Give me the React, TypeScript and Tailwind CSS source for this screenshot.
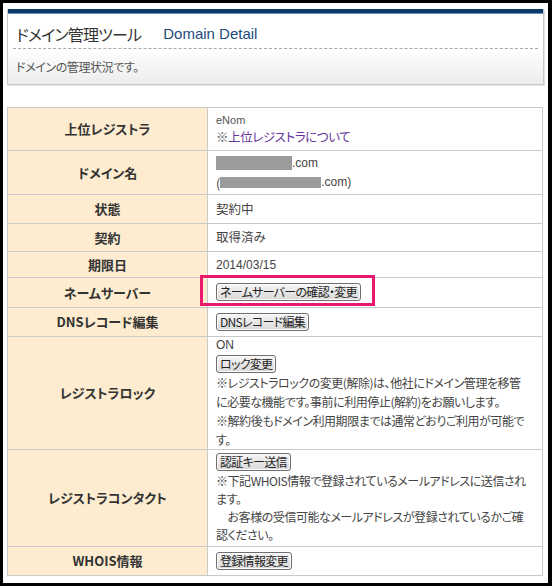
import React from "react";

const btn =
  "inline-flex items-center h-[18px] px-[3px] text-[12px] tracking-[-0.7px] leading-none text-[#222] border border-[#6f6f6f] rounded-[3px] bg-linear-to-b from-[#f6f6f6] to-[#d9d9d9] shadow-[inset_0_0_0_1px_#fbfbfb]";

const labelCls =
  "w-[200px] bg-[#fdeccf] border border-[#c9c9c9] text-center align-middle text-[13px] font-bold text-[#333]";
const valCls =
  "border border-[#c9c9c9] align-middle px-[8px] text-[12.5px] text-[#444] bg-white";
const longCls = "whitespace-nowrap text-[12px] tracking-[-0.45px]";

function Redact({ w, h }: { w: number; h: number }) {
  return <span className="inline-block bg-[#9b9b9b] align-middle" style={{ width: w, height: h }} />;
}

export default function App() {
  return (
    <div className="w-[552px] h-[586px] bg-white border-l-[3px] border-t-[3px] border-r-[4px] border-b-[3px] border-black font-['Noto_Sans_CJK_JP',sans-serif] [font-feature-settings:'palt']">
      {/* header */}
      <div className="ml-[4px] mt-[6px] w-[537px] border-x border-b border-[#c8c8c8] shadow-[1px_1px_0_#e4e4e4]">
        <div className="h-[4px] bg-[#0b3a6b]" />
        <div className="h-[1px] bg-[#6e93bb]" />
        <div className="h-[34px] flex items-center pt-[6px] pl-[8px] bg-white">
          <span className="text-[16px] tracking-[-0.8px] text-[#333]">ドメイン管理ツール</span>
          <span className="ml-[22px] text-[15px] text-[#1d4b7d] font-['Liberation_Sans',sans-serif]">Domain Detail</span>
        </div>
        <div className="mx-[5px] border-t border-dashed border-[#a8a8a8]" />
        <div className="h-[35px] flex items-center pl-[8px] bg-linear-to-b from-white to-[#ececec] text-[12px] tracking-[-0.4px] text-[#555]">
          ドメインの管理状況です。
        </div>
      </div>

      {/* table */}
      <table className="ml-[4px] mt-[22px] w-[536px] border-collapse table-fixed">
        <tbody>
          <tr className="h-[43px]">
            <td className={labelCls}>上位レジストラ</td>
            <td className={valCls}>
              <div className="text-[11px] leading-[15px] text-[#555] font-['Liberation_Sans',sans-serif]">eNom</div>
              <div className="leading-[17px] tracking-[-0.4px]">
                <span className="text-[#555]">※</span>
                <span className="text-[#663399]">上位レジストラについて</span>
              </div>
            </td>
          </tr>
          <tr className="h-[44px]">
            <td className={labelCls}>ドメイン名</td>
            <td className={valCls}>
              <div className="leading-[19px] flex items-center">
                <Redact w={76} h={14} />
                <span className="text-[12px] font-['Liberation_Sans',sans-serif]">.com</span>
              </div>
              <div className="leading-[19px] flex items-center">
                <span>(</span>
                <Redact w={101} h={11} />
                <span className="text-[12px] font-['Liberation_Sans',sans-serif]">.com)</span>
              </div>
            </td>
          </tr>
          <tr className="h-[29px]">
            <td className={labelCls}>状態</td>
            <td className={valCls}>契約中</td>
          </tr>
          <tr className="h-[28px]">
            <td className={labelCls}>契約</td>
            <td className={valCls}>取得済み</td>
          </tr>
          <tr className="h-[26px]">
            <td className={labelCls}>期限日</td>
            <td className={valCls}>
              <span className="text-[12px] font-['Liberation_Sans',sans-serif]">2014/03/15</span>
            </td>
          </tr>
          <tr className="h-[30px]">
            <td className={labelCls}>ネームサーバー</td>
            <td className={valCls + " relative"}>
              <span className={btn}>ネームサーバーの確認・変更</span>
              <div className="absolute left-[-8px] top-[-3px] w-[175px] h-[31px] border-[3px] border-[#e8196f]" />
            </td>
          </tr>
          <tr className="h-[29px]">
            <td className={labelCls}>DNSレコード編集</td>
            <td className={valCls}>
              <span className={btn}>DNSレコード編集</span>
            </td>
          </tr>
          <tr className="h-[112px]">
            <td className={labelCls}>レジストラロック</td>
            <td className={valCls + " leading-[19px]"}>
              <div className="leading-[17px] text-[12px] font-['Liberation_Sans',sans-serif]">ON</div>
              <div className="h-[19px] flex items-center">
                <span className={btn}>ロック変更</span>
              </div>
              <div className={longCls}>※レジストラロックの変更(解除)は、他社にドメイン管理を移管</div>
              <div className={longCls}>に必要な機能です。事前に利用停止(解約)をお願いします。</div>
              <div className={longCls}>※解約後もドメイン利用期限までは通常どおりご利用が可能で</div>
              <div className={longCls}>す。</div>
            </td>
          </tr>
          <tr className="h-[97px]">
            <td className={labelCls}>レジストラコンタクト</td>
            <td className={valCls + " leading-[18px]"}>
              <div className="mb-[1px]">
                <span className={btn}>認証キー送信</span>
              </div>
              <div className={longCls}>※下記WHOIS情報で登録されているメールアドレスに送信され</div>
              <div className={longCls}>ます。</div>
              <div className={longCls}>　お客様の受信可能なメールアドレスが登録されているかご確</div>
              <div className={longCls}>認ください。</div>
            </td>
          </tr>
          <tr className="h-[29px]">
            <td className={labelCls}>WHOIS情報</td>
            <td className={valCls}>
              <span className={btn}>登録情報変更</span>
            </td>
          </tr>
        </tbody>
      </table>
    </div>
  );
}
